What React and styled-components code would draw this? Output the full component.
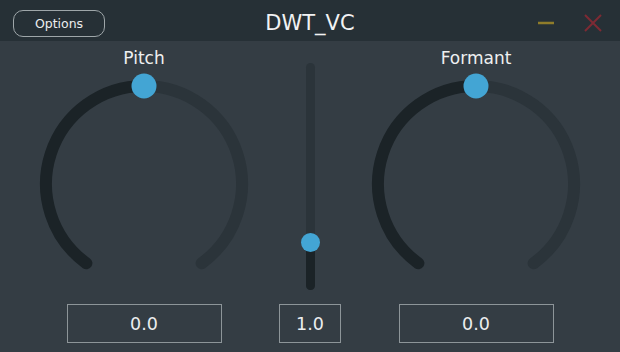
import React from "react";
import styled, { createGlobalStyle } from "styled-components";

const GlobalStyle = createGlobalStyle`
  html, body {
    margin: 0;
    padding: 0;
    background: #343d44;
  }
  body {
    font-family: "DejaVu Sans", "Noto Sans", sans-serif;
    color: #e8eaeb;
  }
`;

const Window = styled.div`
  width: 620px;
  height: 352px;
  background: #343d44;
  display: flex;
  flex-direction: column;
  overflow: hidden;
`;

const TitleBar = styled.div`
  height: 41px;
  flex: none;
  background: #263036;
  display: grid;
  grid-template-columns: 1fr auto 1fr;
  align-items: center;
`;

const OptionsButton = styled.button`
  justify-self: start;
  margin-left: 13px;
  margin-top: 5px;
  width: 92px;
  height: 27px;
  border: 1.5px solid #9ea6a9;
  border-radius: 10px;
  background: transparent;
  color: #eceeef;
  font-family: "DejaVu Sans", sans-serif;
  font-size: 12.5px;
  padding: 0;
`;

const Title = styled.div`
  font-size: 21px;
  color: #f1f2f3;
  margin-top: 4px;
`;

const Controls = styled.div`
  justify-self: end;
  display: flex;
  gap: 23px;
  margin-right: 15px;
  margin-top: 4px;
`;

const ControlButton = styled.div`
  width: 24px;
  height: 24px;
  display: flex;
  align-items: center;
  justify-content: center;
`;

const Body = styled.div`
  flex: 1;
  display: flex;
  align-items: flex-start;
  padding: 0 16px;
`;

const KnobColumn = styled.div`
  width: 256px;
  display: flex;
  flex-direction: column;
  align-items: center;
  padding-top: 7px;
`;

const Label = styled.div`
  font-size: 17px;
  line-height: 20px;
  color: #eef0f1;
`;

const KnobSvg = styled.svg`
  display: block;
  margin-top: 4px;
`;

const ValueBox = styled.div`
  box-sizing: border-box;
  width: ${({ $width }) => $width}px;
  height: 39px;
  margin-top: ${({ $top }) => $top}px;
  border: 1.5px solid #8d9599;
  display: flex;
  align-items: center;
  justify-content: center;
  font-size: 17.5px;
  color: #eceeef;
`;

const SliderColumn = styled.div`
  width: 76px;
  display: flex;
  flex-direction: column;
  align-items: center;
  padding-top: 22px;
`;

const Track = styled.div`
  position: relative;
  width: 9px;
  height: 227px;
  border-radius: 5px;
  background: #2b343a;
`;

const TrackFill = styled.div`
  position: absolute;
  left: 0;
  right: 0;
  bottom: 0;
  border-radius: 5px;
  background: #1b2327;
`;

const Thumb = styled.div`
  position: absolute;
  left: 50%;
  width: 19px;
  height: 19px;
  margin-left: -9.5px;
  margin-top: -9.5px;
  border-radius: 50%;
  background: #43a5d4;
`;

const CX = 128;
const CY = 112;
const R = 98;
const START = 1.2 * Math.PI;
const END = 2.8 * Math.PI;

const point = (a) => [CX + R * Math.sin(a), CY - R * Math.cos(a)];

const Knob = ({ value }) => {
  const a = START + (END - START) * value;
  const [sx, sy] = point(START);
  const [vx, vy] = point(a);
  const [ex, ey] = point(END);
  const largeDone = a - START > Math.PI ? 1 : 0;
  const largeLeft = END - a > Math.PI ? 1 : 0;
  return (
    <KnobSvg width="256" height="206" viewBox="0 0 256 206">
      <path
        d={`M ${sx} ${sy} A ${R} ${R} 0 ${largeDone} 1 ${vx} ${vy}`}
        fill="none"
        stroke="#1b2327"
        strokeWidth="12"
        strokeLinecap="round"
      />
      <path
        d={`M ${vx} ${vy} A ${R} ${R} 0 ${largeLeft} 1 ${ex} ${ey}`}
        fill="none"
        stroke="#2b343a"
        strokeWidth="12"
        strokeLinecap="round"
      />
      <circle cx={vx} cy={vy} r="12.5" fill="#43a5d4" />
    </KnobSvg>
  );
};

const KnobControl = ({ label, value, display }) => (
  <KnobColumn>
    <Label>{label}</Label>
    <Knob value={value} />
    <ValueBox $width={155} $top={26}>{display}</ValueBox>
  </KnobColumn>
);

const VerticalSlider = ({ fraction, display }) => (
  <SliderColumn>
    <Track>
      <TrackFill style={{ height: `${fraction * 100}%` }} />
      <Thumb style={{ top: `${(1 - fraction) * 100}%` }} />
    </Track>
    <ValueBox $width={62} $top={14}>{display}</ValueBox>
  </SliderColumn>
);

export default function App() {
  return (
    <>
      <GlobalStyle />
      <Window>
        <TitleBar>
          <OptionsButton>Options</OptionsButton>
          <Title>DWT_VC</Title>
          <Controls>
            <ControlButton>
              <svg width="18" height="4" viewBox="0 0 18 4">
                <line x1="1" y1="2" x2="17" y2="2" stroke="#8f7c2a" strokeWidth="2.5" />
              </svg>
            </ControlButton>
            <ControlButton>
              <svg width="18" height="18" viewBox="0 0 18 18">
                <path d="M1 1 L17 17 M17 1 L1 17" stroke="#7d2a34" strokeWidth="2" />
              </svg>
            </ControlButton>
          </Controls>
        </TitleBar>
        <Body>
          <KnobControl label="Pitch" value={0.5} display="0.0" />
          <VerticalSlider fraction={0.211} display="1.0" />
          <KnobControl label="Formant" value={0.5} display="0.0" />
        </Body>
      </Window>
    </>
  );
}
